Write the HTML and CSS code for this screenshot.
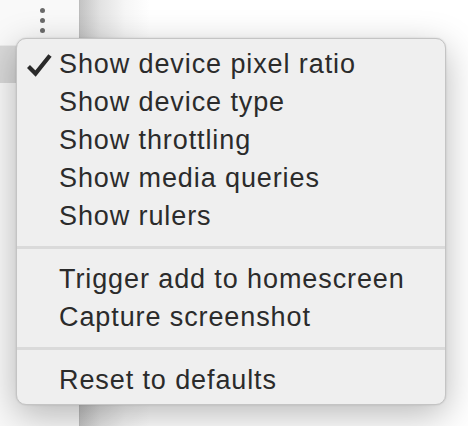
FILE: index.html
```html
<!DOCTYPE html>
<html>
<head>
<meta charset="utf-8">
<link rel="stylesheet" href="styles.css">
</head>
<body>
<div class="page">
  <div class="side">
    <div class="kebab"><span></span><span></span><span></span></div>
    <div class="side-row"></div>
  </div>
  <div class="main"></div>

  <div class="menu">
    <div class="item checked">
      <svg class="check" width="26" height="24" viewBox="0 0 26 24"><path d="M1.5 13.5 L8.5 20.5 L23 2.5" fill="none" stroke="#2a2a2a" stroke-width="4.2" stroke-linejoin="miter" stroke-linecap="butt"/></svg>
      <span>Show device pixel ratio</span>
    </div>
    <div class="item"><span>Show device type</span></div>
    <div class="item"><span>Show throttling</span></div>
    <div class="item"><span>Show media queries</span></div>
    <div class="item"><span>Show rulers</span></div>
    <div class="sep"></div>
    <div class="item"><span>Trigger add to homescreen</span></div>
    <div class="item"><span>Capture screenshot</span></div>
    <div class="sep"></div>
    <div class="item"><span>Reset to defaults</span></div>
  </div>
</div>
</body>
</html>
```

FILE: styles.css
```css
html, body {
  margin: 0;
  padding: 0;
  background: #ffffff;
}
.page {
  position: relative;
  width: 468px;
  height: 426px;
  display: grid;
  grid-template-columns: 80px 1fr;
  overflow: hidden;
}
.side {
  background: #f9f9f9;
  border-right: 1px solid #bdbdbd;
  display: flex;
  flex-direction: column;
}
.kebab {
  height: 45px;
  display: flex;
  flex-direction: column;
  align-items: flex-start;
  padding-top: 8px;
  padding-left: 40px;
  box-sizing: border-box;
  gap: 5px;
}
.kebab span {
  width: 5px;
  height: 5px;
  border-radius: 50%;
  background: #6b6b6b;
}
.side-row {
  height: 38px;
  background: #d9d9d9;
  border-top: 1px solid #ececec;
  box-sizing: border-box;
}
.main {
  background: linear-gradient(to right, #c4c4c4 0px, #e2e2e2 20px, #f6f6f6 45px, #ffffff 70px);
}
.menu {
  position: absolute;
  left: 16px;
  top: 38px;
  width: 430px;
  height: 367px;
  box-sizing: border-box;
  background: #efefef;
  border: 1px solid #c4c4c4;
  border-radius: 10px;
  box-shadow: 0 10px 36px rgba(0, 0, 0, 0.28), 0 0 2px rgba(0,0,0,0.15);
  padding: 6px 0 6px;
  font-family: "Liberation Sans", Arial, sans-serif;
  font-size: 27px;
  letter-spacing: 0.9px;
  color: #2b2b2b;
}
.item {
  position: relative;
  height: 38px;
  display: flex;
  align-items: center;
  padding-left: 42px;
  white-space: nowrap;
}
.check {
  position: absolute;
  left: 10px;
  top: 8px;
}
.sep {
  height: 3px;
  background: #dadada;
  margin: 11px 0;
}
```
